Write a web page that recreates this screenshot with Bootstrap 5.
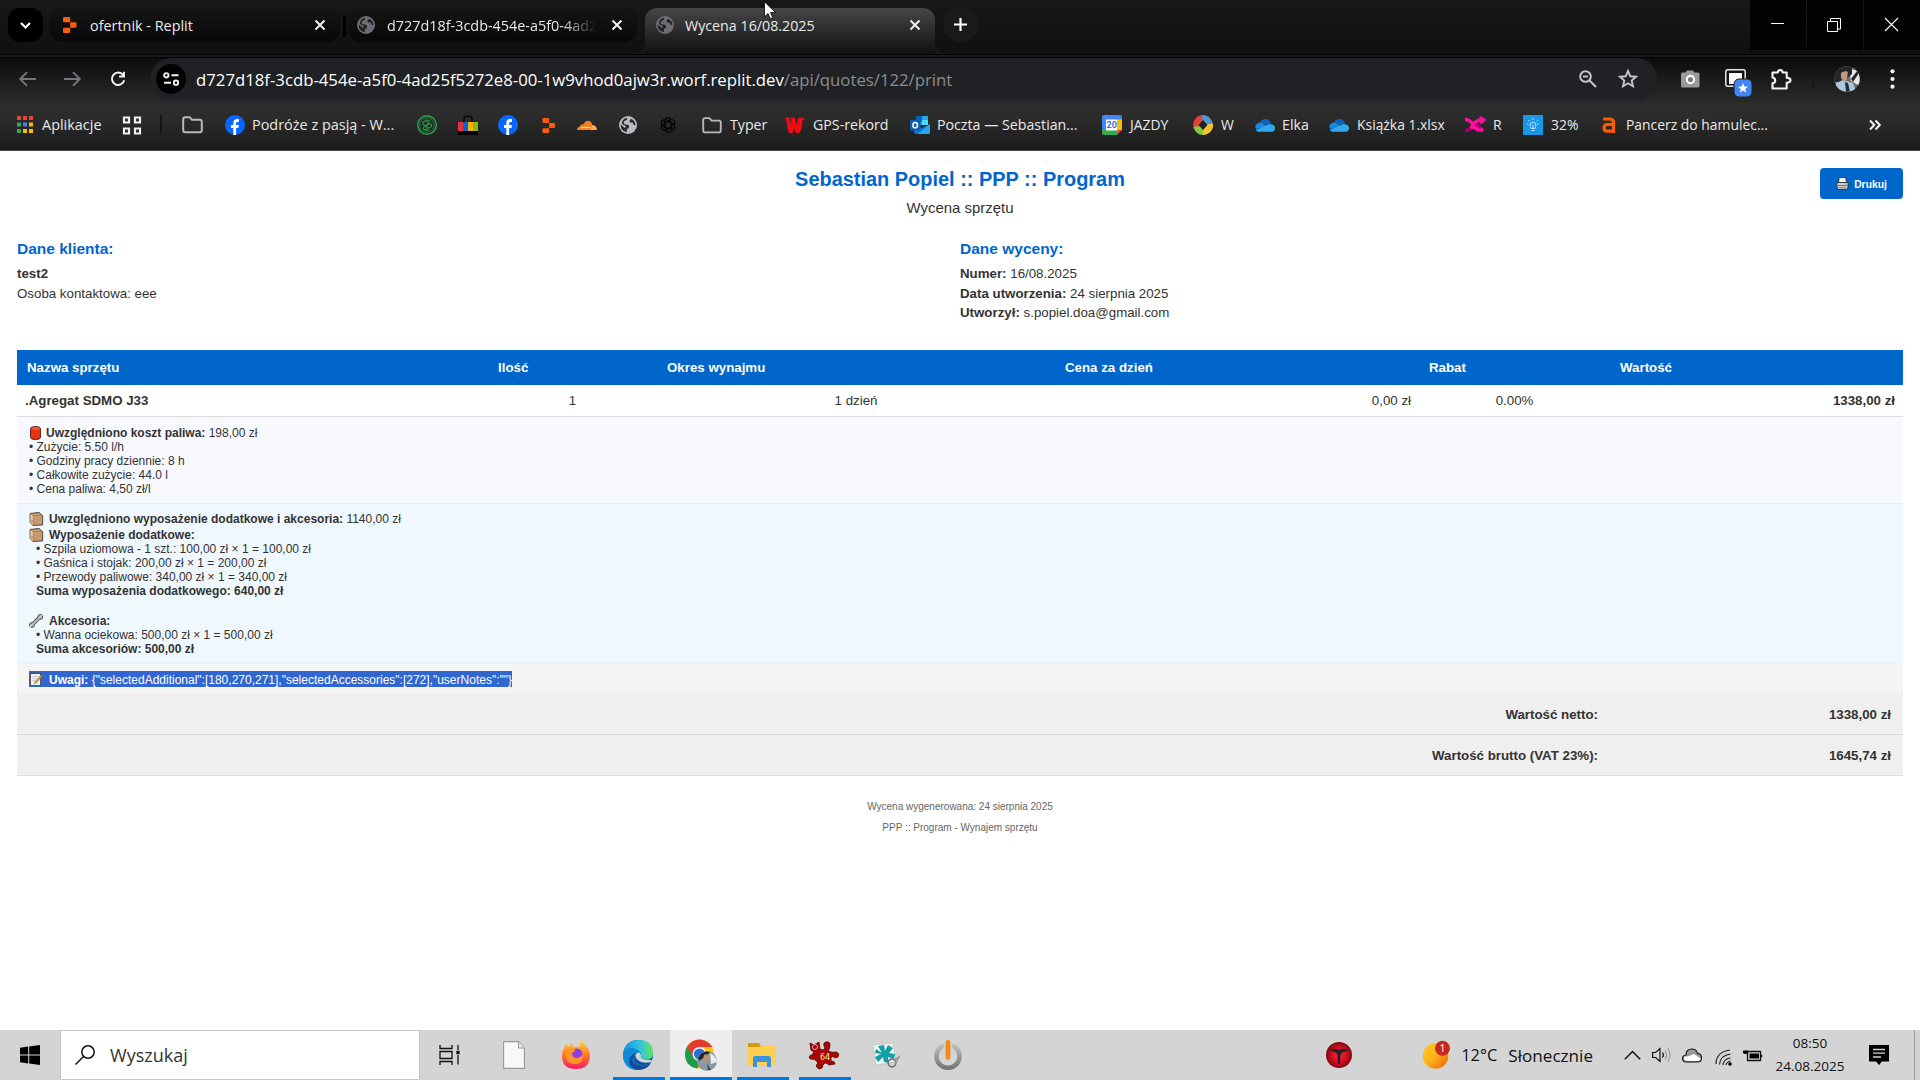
<!DOCTYPE html>
<html lang="pl">
<head>
<meta charset="utf-8">
<meta name="viewport" content="width=device-width, initial-scale=1">
<title>Wycena 16/08.2025</title>
<link href="https://cdn.jsdelivr.net/npm/bootstrap@5.3.0/dist/css/bootstrap.min.css" rel="stylesheet">
<style>
:root{--ui:"Open Sans","Noto Sans",sans-serif;--doc:"Liberation Sans",Arial,sans-serif;--blue:#0066cc}
body{width:1920px;height:1080px;overflow:hidden;background:#fff;color:#333;font-family:var(--doc)}
svg{display:block;flex:none;overflow:visible}
.browser-chrome{font-family:var(--ui);color:#e9e9e9;height:151px;border-bottom:1px solid #444}
/* tab strip */
.tab-strip{height:58px;background:linear-gradient(#181818,#101010 52px,#111 54px,#000 54px,#000 55px,#1c1c1c 55px,#1a1a1a 57px,#000 57px);padding-left:8px}
.tab-search{width:35px;height:34px;margin-top:8px;border-radius:12px;background:#000}
.tab-item{height:34px;margin-top:8px;border-radius:12px;background:linear-gradient(#151515,#080808);padding:0 6px 0 13px;font-size:14.4px;line-height:34px}
.tab-one{width:290px;margin-left:7px}
.tab-two{width:289px;margin-left:2px;padding-left:9px}
.tab-two .tab-label{margin-left:12px}
.tab-rule{width:3px;height:21px;margin:16px 0 0 3px;background:#000}
.tab-open{position:relative;width:290px;height:46px;margin:8px 0 0 8px;padding:0 10px 12px 11px;border-radius:12px 12px 0 0;background:linear-gradient(#464646,#101010);line-height:34px;font-size:14.25px}
.tab-open::before,.tab-open::after{content:"";position:absolute;bottom:0;width:12px;height:12px}
.tab-open::before{left:-12px;background:radial-gradient(circle at 0 0,transparent 11.5px,#181818 12px)}
.tab-open::after{right:-12px;background:radial-gradient(circle at 100% 0,transparent 11.5px,#181818 12px)}
.tab-label{overflow:hidden;white-space:nowrap;margin-left:13px;padding-top:1px}
.tab-open .tab-label{margin-left:11px}
.tab-fade{-webkit-mask-image:linear-gradient(90deg,#000 175px,transparent 209px);mask-image:linear-gradient(90deg,#000 175px,transparent 209px);width:209px}
.tab-plus{width:35px;height:35px;margin:7px 0 0 8px;border-radius:50%;background:#1a1a1a}
.win-btn{width:56px;height:50px;background:#020202;margin-left:1px;padding:0 2px 1px 0}
/* address row */
.address-row{height:45px;background:linear-gradient(#0c0c0c,#292929 43px)}
.bar-line{height:42px}
.nav-icons{width:150px;padding-left:18px;gap:24px}
.omnibox{width:1507px;height:42px;border-radius:21px;background:#202125;padding:0 19px 0 6px;font-size:16.74px;white-space:nowrap}
.star-icon{margin-left:21px}
.site-btn{width:30px;height:30px;border-radius:50%;background:#000;margin-right:10px}
.url-line{padding-top:1px}
.url-path{color:#8b8d91}
.ext-group{margin-left:23px}
.avatar{margin-left:20px}
.ext-wrap{width:21px;height:21px;position:relative;margin-left:25px}
.ext-star{position:absolute;left:8px;top:9px;width:20px;height:20px}
.ext-rule{width:2px;height:20px;background:#171717;margin-left:21px}
/* bookmarks */
.bookmark-row{height:47px;background:linear-gradient(#2d2d2d,#2b2b2b 16px,#1b1b1b);display:grid;align-items:start;padding-left:15px;font-size:14.2px;
 grid-template-columns:107px 38px 22px 43px 192px 41px 40px 40px 39px 42px 41px 42px 83px 125px 192px 91px 62px 74px 136px 58px 76px 266px 40px}
.bookmark-row>a{display:flex;align-items:center;gap:8px;color:#e9e9e9;text-decoration:none;white-space:nowrap;height:44px}
.bm-wide{font-size:14.45px}.bm-slim{font-size:13.9px}
.bookmark-row>.bm-tight{gap:7px}
.bm-rule{width:2px;height:19px;background:#151515;margin-top:12px}
/* quote sheet */
.quote-sheet{height:879px;padding:14px 17px 0;position:relative;font-size:13.3px}
.quote-title{font-size:19.95px;line-height:28px;font-weight:700;color:var(--blue)}
.quote-sub{font-size:14.95px;line-height:20px;margin-top:5px}
.print-btn{position:absolute;right:17px;top:17px;width:83px;height:31px;border:0;border-radius:4px;background:var(--blue);color:#fff;font:700 10.3px/31px var(--doc);gap:5px}
.print-btn span{padding-top:1px}
.party-row{margin-top:20px;height:112px;line-height:19.6px}
.party-row h3{font:700 15.5px/22px var(--doc);color:var(--blue);margin:0 0 4.3px}
.quote-table{table-layout:fixed;width:1886px;margin:0;border-collapse:separate;border-spacing:0;color:#333;font-size:13.3px;line-height:16px}
.quote-table>:not(caption)>*>*{background:transparent;color:inherit;box-shadow:none;border-bottom:1px solid #ddd;padding:0 8px;vertical-align:middle}
.quote-table>thead>tr>th{background:var(--blue);color:#fff;border:0;height:35px;padding:0 10px}
.quote-table>tbody>.line-item>td{height:32px}
.quote-table>tbody>.detail>td{font-size:12px;line-height:14px;padding:0 12px;vertical-align:top;border-bottom-color:#eee}
.detail p{margin:0;height:14px;white-space:nowrap}
.detail .sub-line{padding-left:7px}
.detail .lead-line{display:flex;align-items:center;gap:5px}
.quote-table>tbody>.fuel>td{background:#f8f9ff;height:87px;padding-top:8px}
.fuel .lead-line{height:15px}
.quote-table>tbody>.equipment>td{background:#f0f8ff;height:160px;padding-top:7px}
.equipment .lead-line{height:15.5px}
.equipment .sub-head{padding-top:1px}
.equipment .tool-head{padding-top:2px}
.quote-table>tbody>.remarks>td{background:#f5f5f5;height:30px;padding-top:7px}
.remarks .lead-line{display:inline-flex;height:16px;background:#3166d0;color:#fff}
.remarks .lead-line span{padding-top:2px}
.quote-table>tfoot>tr>td{background:#efefef;height:41px;font-weight:700;text-align:right;padding:1px 12px 0}
.quote-table>tfoot>tr:first-child>td{border-bottom-color:#d9dadb}
.quote-foot{margin-top:20px;font-size:10px;line-height:21px;color:#666}
/* task bar */
.task-bar{height:50px;background:#d4d4d4;font-family:var(--ui);color:#111}
.start-btn{width:60px;height:50px}
.search-box{width:360px;height:50px;border:1px solid #c8c8c8;background:#fff;padding-left:14px;gap:15px;font-size:18.05px;color:#333}
.search-box span{padding-top:2px}
.task-app{width:62px;height:50px;display:flex;align-items:center;justify-content:center;position:relative;padding:0 2px 1px 0}
.task-run::after{content:"";position:absolute;left:5px;right:5px;bottom:0;height:3px;background:#0078d7}
.task-live{background:#ededed;padding:0}
.task-live::after{left:0;right:0}
.task-view{width:60px}
.file-app{margin-left:4px;padding-right:3px}
.sun-wrap{position:relative;margin:0 12px 0 71px}
.temp-text{font-size:16.4px;padding-top:1px}
.sky-text{font-size:17.1px;margin:0 31px 0 11px;padding-top:1px}
.tray-icons{gap:10px}
.clock{width:80px;font-size:13.5px;line-height:23px;text-align:center;margin-left:7px}
.note-icon{margin-left:19px}
.desk-edge{width:1px;height:50px;background:#9c9c9c;margin:0 5px 0 25px}
.mouse-pointer{position:absolute;left:764px;top:1px;z-index:9}
</style>
<script src="https://cdn.jsdelivr.net/npm/bootstrap@5.3.0/dist/js/bootstrap.bundle.min.js"></script>
</head>
<body>
<svg width="0" height="0" class="position-absolute" aria-hidden="true">
<defs>
<symbol id="close" viewBox="0 0 12 12"><path d="M1.500 1.500l9 9M10.500 1.500l-9 9" stroke="#f0f0f0" stroke-width="2" fill="none"/></symbol>
<symbol id="replit" viewBox="0 0 14 16"><path fill="#fa5b0f" d="M0 1.200Q0 0 1.200 0H6q1.200 0 1.200 1.200v4H1.200Q0 5.200 0 4zM7.200 5.300h5q1.300 0 1.300 1.200v3q0 1.200-1.300 1.200h-5zM0 12Q0 10.800 1.200 10.800h6v4Q7.200 16 6 16H1.200Q0 16 0 14.800z"/></symbol>
<symbol id="globe" viewBox="0 0 18 18"><circle cx="9" cy="9" r="9" fill="currentColor"/><path d="M8 1.800q.6 2.400-1.500 2.700T4.700 7q.3 1.500 2.300 1.500 3 0 3 2.200T8.300 12.500q-.8 1-.5 3.700-3.300-.5-5-3-1.300-2-1.100-4.700l3.500 3q1.500.8 1.500-.8Q6.500 9.300 4.600 9 2.500 8.300 3 5.700 4.500 2.500 8 1.800zM12.500 3q-2 .5-2 2.200 0 1.500 2 1.300 1.700-.3 1.700 1.200 0 1.700 2.300 1.300Q16.300 5 12.500 3z" fill="#17181a" fill-opacity=".9"/></symbol>
<symbol id="folder" viewBox="0 0 21 18"><path d="M1.200 3.200q0-2 2-2h4.500l2.300 2.600h7.800q2 0 2 2v8.500q0 2-2 2H3.200q-2 0-2-2z" fill="none" stroke="#b9b9b9" stroke-width="2"/></symbol>
<symbol id="facebook" viewBox="0 0 20 20"><circle cx="10" cy="10" r="10" fill="#0866ff"/><path d="M8.300 20v-7H6v-3h2.300V8.300c0-3 1.400-4.300 4-4.300.8 0 1.400.1 1.700.2V7h-1.200c-1.300 0-1.700.6-1.700 1.500V10h2.800l-.5 3h-2.300v7z" fill="#fff"/></symbol>
<symbol id="onedrive" viewBox="0 0 20 13"><path fill="#0f63b8" d="M5 4.500A5.500 5.500 0 0 1 15.500 3.500L17 7z"/><path fill="#1688dd" d="M1 10A4.300 4.300 0 0 1 6 3.800L14 8z"/><path fill="#32a9ee" d="M3.500 12.700Q1.500 12.500.7 11L14 5.300q6-.3 6 4 0 3.400-3.500 3.400z"/></symbol>
<symbol id="box" viewBox="0 0 14 14"><path d="M.6 1.400L9.600.5l3.600 3.200v9.200l-9.700.5L.6 10.500z" fill="#c79a72" stroke="#4a3728" stroke-width=".9"/><path d="M3.600 3.800l9-.4M3.600 3.800v9.400M.8 1.500l2.800 2.300" stroke="#a67c58" fill="none" stroke-width=".7"/><path d="M.9 2l2.500 2v8.700L1 10.200z" fill="#e8c7a4"/><path d="M1.800 9h1.500" stroke="#b13d2c"/></symbol>
<linearGradient id="gSun" x2="1" y2="1"><stop stop-color="#ffce21"/><stop offset=".5" stop-color="#ffb01a"/><stop offset="1" stop-color="#e85d04"/></linearGradient>
<linearGradient id="gFox" x2="0" y2="1"><stop stop-color="#ffd93a"/><stop offset=".5" stop-color="#ff7a2a"/><stop offset="1" stop-color="#f01b6a"/></linearGradient>
<linearGradient id="gEdge" x2="1"><stop stop-color="#1593dd"/><stop offset=".6" stop-color="#2fc7dc"/><stop offset="1" stop-color="#66e35b"/></linearGradient>
<linearGradient id="gPow" x2="0" y2="1"><stop stop-color="#bbb"/><stop offset="1" stop-color="#777"/></linearGradient>
<radialGradient id="gRed"><stop stop-color="#ff2638"/><stop offset=".6" stop-color="#d10e22"/><stop offset="1" stop-color="#7c0812"/></radialGradient>
</defs>
</svg>

<header class="browser-chrome">
  <div class="tab-strip d-flex align-items-start">
    <div class="tab-search d-flex align-items-center justify-content-center"><svg width="11" height="7" viewBox="0 0 11 7"><path d="M1 1l4.500 4.500L10 1" fill="none" stroke="#fff" stroke-width="2.200"/></svg></div>
    <div class="tab-item tab-one d-flex align-items-center"><svg width="14" height="16"><use href="#replit"/></svg><span class="tab-label flex-grow-1">ofertnik - Replit</span><svg class="me-2" width="12" height="12"><use href="#close"/></svg></div>
    <div class="tab-rule"></div>
    <div class="tab-item tab-two d-flex align-items-center"><svg width="18" height="18" color="#6a6e74"><use href="#globe"/></svg><span class="tab-label tab-fade">d727d18f-3cdb-454e-a5f0-4ad25f5272e8</span><svg class="ms-auto me-2" width="12" height="12"><use href="#close"/></svg></div>
    <div class="tab-open d-flex align-items-center"><svg width="18" height="18" color="#6a6e74"><use href="#globe"/></svg><span class="tab-label flex-grow-1">Wycena 16/08.2025</span><svg class="me-1" width="12" height="12"><use href="#close"/></svg></div>
    <div class="tab-plus d-flex align-items-center justify-content-center"><svg width="13" height="13" viewBox="0 0 13 13"><path d="M6.500 0v13M0 6.500h13" stroke="#fff" stroke-width="2.200"/></svg></div>
    <div class="ms-auto d-flex">
      <div class="win-btn d-flex align-items-center justify-content-center"><svg width="13" height="13"><path d="M0 5.500h13" stroke="#fff"/></svg></div>
      <div class="win-btn d-flex align-items-center justify-content-center"><svg width="14" height="14"><path d="M.5 3.500h10v10H.5zM3.500 3V.5h10V11H11" fill="none" stroke="#fff"/></svg></div>
      <div class="win-btn d-flex align-items-center justify-content-center"><svg width="13" height="13"><path d="M0 0l13 13M13 0L0 13" stroke="#fff" stroke-width="1.100"/></svg></div>
    </div>
  </div>

  <div class="address-row d-flex align-items-start">
    <div class="nav-icons bar-line d-flex align-items-center">
      <svg width="20" height="16" viewBox="0 0 20 16" fill="none" stroke="#74767a" stroke-width="1.900"><path d="M18 8H2.500M9 1.200L2.200 8 9 14.800"/></svg>
      <svg width="20" height="16" viewBox="0 0 20 16" fill="none" stroke="#74767a" stroke-width="1.900"><path d="M2 8h15.500M11 1.200L17.800 8 11 14.800"/></svg>
      <svg class="ms-1" width="16" height="16" viewBox="0 0 18 18" fill="none" stroke="#f2f2f2" stroke-width="2.200"><path d="M14.800 4.500A7 7 0 1 0 16 10.500M15.700.8v5.400h-5.500"/></svg>
    </div>
    <div class="omnibox d-flex align-items-center">
      <div class="site-btn d-flex align-items-center justify-content-center"><svg width="17" height="14" viewBox="0 0 17 14" fill="none" stroke="#f2f2f2" stroke-width="1.900"><circle cx="3.300" cy="3.300" r="2.200"/><path d="M8.500 3.300H15.500M1 10.700h7"/><circle cx="13" cy="10.700" r="2.200"/></svg></div>
      <div class="url-line"><span class="text-white">d727d18f-3cdb-454e-a5f0-4ad25f5272e8-00-1w9vhod0ajw3r.worf.replit.dev</span><span class="url-path">/api/quotes/122/print</span></div>
      <svg class="ms-auto" width="18" height="18" viewBox="0 0 18 18" fill="none" stroke="#c4c5c7" stroke-width="2"><circle cx="6.500" cy="6.500" r="5.300"/><path d="M10.500 10.500l6.500 6.500M4 6.500h5"/></svg>
      <svg class="star-icon" width="20" height="20" viewBox="0 0 20 20" fill="none" stroke="#c4c5c7" stroke-width="1.900"><path d="M10 2l2.300 5.300 5.700.5-4.300 3.800 1.300 5.700-5-3-5 3 1.300-5.700L2 7.800l5.700-.5z"/></svg>
    </div>
    <div class="ext-group bar-line d-flex align-items-center">
      <svg width="20" height="18" viewBox="0 0 20 18"><path d="M1 4q0-1.500 1.500-1.500h3L7 .5h6l1.500 2h3.500q1.500 0 1.500 1.500v12q0 1.500-1.500 1.500H2.500Q1 17.500 1 16z" fill="#9a9a9a"/><circle cx="10.500" cy="9.500" r="3.600" fill="#777" stroke="#fff" stroke-width="2.100"/></svg>
      <div class="ext-wrap"><svg width="21" height="18" viewBox="0 0 21 18"><rect x=".8" y=".8" width="19.400" height="16.400" rx="2" fill="#111" stroke="#e8e8e8" stroke-width="1.500"/><path d="M4 4h13v8H11v3H4z" fill="#fff"/></svg><svg class="ext-star" viewBox="0 0 20 20"><rect x="1" y="1" width="18" height="18" rx="5" fill="#4285f4" stroke="#222"/><path d="M10 5l1.400 3.500 3.600.2-2.800 2.300 1 3.600L10 12.600l-3.200 2 1-3.600L5 8.700l3.600-.2z" fill="#fff"/></svg></div>
      <svg class="ms-4" width="21" height="21" viewBox="0 0 21 21"><path d="M2.500 3.500h5.200Q8 1 10.200 1t2.500 2.500h4v5.300Q20.500 9 20.500 11.300t-3.800 2.500v5.700H2.500v-5.200q2.700-.5 2.700-2.900T2.500 8.500z" fill="none" stroke="#f2f2f2" stroke-width="2.100" stroke-linejoin="round"/></svg>
      <div class="ext-rule"></div>
      <svg class="avatar" width="26" height="26" viewBox="0 0 26 26"><clipPath id="face"><circle cx="13" cy="13" r="12.700"/></clipPath><g clip-path="url(#face)"><path fill="#6e706c" d="M0 0h26v26H0z"/><path fill="#e5e9ea" d="M15 3l11 2v15l-9-5z"/><path fill="#26292b" d="M0 0h18v8L9 16H0zM17 13l6-8 2 2-6 9z"/><path fill="#aac7dc" d="M2 17l7-3 10 3 3 9H2z"/><path fill="#c49a82" d="M7 5q4-3 7 0l-1 8-3 3-3-4z"/><path fill="#1e2b42" d="M11 16l3 1 2 9h-4z"/><path fill="#2b2420" d="M6 7q0-5 5-5t4 5l-3-2z"/></g></svg>
      <svg class="ms-4 ps-1" width="9" height="20" viewBox="0 0 5 20" fill="#f2f2f2"><circle cx="4.500" cy="2.300" r="2.100"/><circle cx="4.500" cy="10" r="2.100"/><circle cx="4.500" cy="17.700" r="2.100"/></svg>
    </div>
  </div>

  <nav class="bookmark-row">
    <a class="bm-wide bm-tight"><svg width="20" height="18" viewBox="0 0 20 18"><path fill="#ea4335" d="M2 0h4v4H2zM8 0h4v4H8zM14 0h4v4h-4z"/><path fill="#34a853" d="M2 6.500h4v4H2zM2 13h4v4H2z"/><path fill="#4285f4" d="M8 6.500h4v4H8z"/><path fill="#fbbc04" d="M14 6.500h4v4h-4zM8 13h4v4H8zM14 13h4v4h-4z"/></svg>Aplikacje</a>
    <a><svg width="19" height="19" viewBox="0 0 19 19" fill="none" stroke="#f0f0f0" stroke-width="2.200"><path d="M2 1.500h5v5H2zM13 1.500h5v5h-5zM2 12.500h5v5H2zM13 12.500h5v5h-5z"/></svg></a>
    <div class="bm-rule"></div>
    <a><svg width="21" height="18"><use href="#folder"/></svg></a>
    <a class="bm-wide bm-tight"><svg width="20" height="20"><use href="#facebook"/></svg>Podróże z pasją - W...</a>
    <a><svg width="20" height="20" viewBox="0 0 20 20" fill="none" stroke="#22a24a"><circle cx="10" cy="10" r="9.300" stroke-width="1.500"/><circle cx="10" cy="10" r="7.300" stroke-width=".6"/><path stroke-width="1.100" d="M10 10q-5 1-4-2t3-1.500q1-2.500 2.500-1t-1.500 4.500q4-2.500 4.500 0t-3 2.500q1 2.500-1 3T10 10zm0 0q-3 1-3.500 3t2 1.500M8 14.500v1.500"/></svg></a>
    <a><svg width="20" height="20" viewBox="0 0 20 20"><path d="M6 7V4q0-3 4-3t4 3v3" stroke="#080808" stroke-width="1.500" fill="none"/><path fill="#e53238" d="M0 7h5v9H0z"/><path fill="#0064d2" d="M5 7h5v9H5z"/><path fill="#f5af02" d="M10 7h5v9h-5z"/><path fill="#86b817" d="M15 7h5v9h-5z"/><path d="M0 16h20v4H0z"/></svg></a>
    <a><svg width="20" height="20"><use href="#facebook"/></svg></a>
    <a class="ps-1"><svg width="14" height="15"><use href="#replit"/></svg></a>
    <a><svg width="20" height="20" viewBox="0 0 20 20"><path fill="#f38020" d="M0 15q0-3 3-3.500Q4 8.500 6.500 9.500 8.500 5 12 6q3 .8 3.300 4L14 15z"/><path fill="#faae40" d="M15 10q4.500 0 5 5h-6.500z"/><path d="M4 12.600h9.500" stroke="#fff" stroke-width=".8"/></svg></a>
    <a><svg width="18" height="18" color="#b8babd"><use href="#globe"/></svg></a>
    <a><svg width="16" height="18" viewBox="-9 -9 18 18" fill="none" stroke="#050505" stroke-width="1.300"><g id="petal"><path d="M-3.500-2.200V-5.500Q-3-8.300 0-8.300 2-8.300 3.200-6.600M-3.500 2V-3L2-6"/></g><use href="#petal" transform="rotate(60)"/><use href="#petal" transform="rotate(120)"/><use href="#petal" transform="rotate(180)"/><use href="#petal" transform="rotate(240)"/><use href="#petal" transform="rotate(300)"/></svg></a>
    <a><svg width="20" height="17"><use href="#folder"/></svg>Typer</a>
    <a><svg width="20" height="17" viewBox="0 0 20 17"><path fill="#f30b12" d="M0 1q2.500-1.500 4.500 0L6 7.500q1-4-.3-6.500 2.500-1 4 0l1.800 6.500q2-3 1-5.500 1-2 3-1.500L18 1q2 1 2 3-2-1.500-3-.5 1 3-.5 6.500Q15.500 16.500 12.500 16.500 10 16 9 11q-.5 5.500-3 5.500T2.700 12L1.500 5Q1.300 2 0 1z"/></svg>GPS-rekord</a>
    <a class="bm-tight"><svg width="20" height="18" viewBox="0 0 20 18"><path fill="#28a8ea" d="M6 0h12v9H6z"/><path fill="#0364b8" d="M6 0h6v6H6z"/><path fill="#50d9ff" d="M12 4h6v5h-6z"/><path fill="#0f78d4" d="M4 9l8 3 8-4v8q0 2-2 2H6q-2 0-2-2z"/><path fill="#28a8ea" d="M8 18L20 8v8q0 2-2 2z"/><rect y="4" width="10.500" height="10.500" rx="1" fill="#0a5fb4"/><ellipse cx="5.200" cy="9.200" rx="2.300" ry="2.600" fill="none" stroke="#fff" stroke-width="1.500"/></svg>Poczta — Sebastian...</a>
    <a class="bm-slim"><svg width="20" height="20" viewBox="0 0 20 20"><path fill="#4285f4" d="M0 2q0-2 2-2h16q2 0 2 2v3H0z"/><path fill="#4285f4" d="M0 4h4.500v11H0z"/><path fill="#34a853" d="M0 15h15v5H2q-2 0-2-2z"/><path fill="#fbbc04" d="M15.500 4.500H20V15h-4.500z"/><path fill="#ea4335" d="M15 15h5l-5 5z"/><path fill="#fff" d="M4 4.500h11.500V15.500H4z"/><text x="9.700" y="13.400" text-anchor="middle" font-family="Roboto" font-weight="700" font-size="9" fill="#3570df">20</text></svg>JAZDY</a>
    <a class="bm-slim"><svg width="20" height="20" viewBox="0 0 20 20"><path fill="#e4413b" d="M10 10L1 14A10 10 0 0 1 10 0z"/><path fill="#4b9ad4" d="M10 10L9 0A10 10 0 0 1 19.500 12z"/><path fill="#f6c429" d="M10 10L20 8.500A10 10 0 0 1 10 20z"/><path fill="#8bc63f" d="M10 10v10A10 10 0 0 1 .5 12z"/><path fill="#222" d="M10 5l4.500 5-4.500 5-4.500-5z"/></svg>W</a>
    <a class="bm-tight"><svg width="20" height="13"><use href="#onedrive"/></svg>Elka</a>
    <a class="bm-slim"><svg width="20" height="13"><use href="#onedrive"/></svg>Książka 1.xlsx</a>
    <a class="bm-slim"><svg width="20" height="16" viewBox="0 0 20 16" fill="none" stroke-width="3.600"><path stroke="#a8006b" d="M0 13.500q5 0 7-4M11.500 7l7 7"/><path stroke="#ff0f9b" d="M0 2.500q5 0 8 5t6 5.500h4M6 11.500Q10 3 15.500 3H18M14.500.5L18.500 3 15 6"/></svg>R</a>
    <a class="bm-slim"><svg width="20" height="20" viewBox="0 0 20 20"><rect width="20" height="20" rx="1" fill="#1899e8"/><path d="M8 13.500q0-2-1-3Q7 7 10 7t3 3.500q-1 1-1 3zM8.500 15.500h3M10 9.500v4M10 3v2M5 5l1.300 1.300M15 5l-1.300 1.300M4 9h1.500M16 9h-1.500" fill="none" stroke="#c6e8ff" stroke-width=".9"/></svg>32%</a>
    <a class="bm-slim bm-tight"><svg width="20" height="16" viewBox="0 0 20 16" fill="none" stroke="#ff5a00" stroke-width="3.200"><path d="M4 2h6.500q4 0 4 3.500v10.500M14 7.500H8.500q-3.500 0-3.500 3.200 0 3.500 3.500 3.500H14"/></svg>Pancerz do hamulec...</a>
    <a class="ps-1"><svg width="12" height="10" viewBox="0 0 12 10" fill="none" stroke="#f2f2f2" stroke-width="2"><path d="M1 .5L5.300 5 1 9.500M6.500.5L10.800 5 6.500 9.500"/></svg></a>
  </nav>
</header>

<main class="quote-sheet">
  <button class="print-btn btn p-0 d-flex align-items-center justify-content-center"><svg width="13" height="13" viewBox="0 0 13 13"><path fill="#f3f3ee" stroke="#292929" stroke-width=".8" d="M3.200.5h6.500l.8 5H2.500z"/><path fill="#cfcfcb" stroke="#292929" stroke-width=".8" d="M1 5.500h11v4.500l-1.200 2.500H2.200L1 10z"/><path stroke="#777" d="M2 8.500h9M3 10.800h7"/><path stroke="#a0c71b" d="M8.500 7h2"/></svg><span>Drukuj</span></button>
  <div class="text-center">
    <div class="quote-title">Sebastian Popiel :: PPP :: Program</div>
    <div class="quote-sub">Wycena sprzętu</div>
  </div>
  <div class="party-row row g-0">
    <section class="col-6"><h3>Dane klienta:</h3><strong>test2</strong><br>Osoba kontaktowa: eee</section>
    <section class="col-6"><h3>Dane wyceny:</h3><strong>Numer:</strong> 16/08.2025<br><strong>Data utworzenia:</strong> 24 sierpnia 2025<br><strong>Utworzył:</strong> s.popiel.doa@gmail.com</section>
  </div>
  <table class="table quote-table">
    <colgroup><col width="471"><col width="169"><col width="398"><col width="364"><col width="191"><col width="293"></colgroup>
    <thead><tr><th>Nazwa sprzętu</th><th>Ilość</th><th>Okres wynajmu</th><th>Cena za dzień</th><th>Rabat</th><th>Wartość</th></tr></thead>
    <tbody>
      <tr class="line-item"><td class="fw-bold">.Agregat SDMO J33</td><td class="text-center">1</td><td class="text-center">1 dzień</td><td class="text-end">0,00 zł</td><td class="text-center">0.00%</td><td class="text-end fw-bold">1338,00 zł</td></tr>
      <tr class="detail fuel"><td colspan="6">
        <p class="lead-line"><svg width="12" height="14" viewBox="0 0 12 14"><path fill="#e8330d" stroke="#3e0c06" stroke-width=".8" d="M1.500 2.500Q1.500.5 6.500.5t5 2v9q0 2-5 2t-5-2z"/><ellipse cx="6.500" cy="2.500" rx="4" ry="1.300" fill="#f75a30"/></svg><span><strong>Uwzględniono koszt paliwa:</strong> 198,00 zł</span></p>
        <p>• Zużycie: 5.50 l/h</p><p>• Godziny pracy dziennie: 8 h</p><p>• Całkowite zużycie: 44.0 l</p><p>• Cena paliwa: 4,50 zł/l</p>
      </td></tr>
      <tr class="detail equipment"><td colspan="6">
        <p class="lead-line"><svg width="15" height="14"><use href="#box"/></svg><span><strong>Uwzględniono wyposażenie dodatkowe i akcesoria:</strong> 1140,00 zł</span></p>
        <p class="lead-line sub-head"><svg width="15" height="14"><use href="#box"/></svg><strong>Wyposażenie dodatkowe:</strong></p>
        <p class="sub-line">• Szpila uziomowa - 1 szt.: 100,00 zł × 1 = 100,00 zł</p>
        <p class="sub-line">• Gaśnica i stojak: 200,00 zł × 1 = 200,00 zł</p>
        <p class="sub-line">• Przewody paliwowe: 340,00 zł × 1 = 340,00 zł</p>
        <p class="sub-line"><strong>Suma wyposażenia dodatkowego: 640,00 zł</strong></p>
        <p>&nbsp;</p>
        <p class="lead-line tool-head"><svg width="15" height="14" viewBox="0 0 15 14"><path d="M3.500 10.500L10.500 3.500" stroke="#333" stroke-width="3.600"/><circle cx="3" cy="11" r="2.400" fill="#bbb" stroke="#333" stroke-width=".9"/><circle cx="11.300" cy="2.900" r="2.400" fill="#bbb" stroke="#333" stroke-width=".9"/><path d="M3.300 10.700L11 3.200" stroke="#c4c4c4" stroke-width="1.900"/><path d="M2.700 11.300L.6 13.400M11.600 2.600L13.700.5" stroke="#f0f8ff" stroke-width="1"/></svg><strong>Akcesoria:</strong></p>
        <p class="sub-line">• Wanna ociekowa: 500,00 zł × 1 = 500,00 zł</p>
        <p class="sub-line"><strong>Suma akcesoriów: 500,00 zł</strong></p>
      </td></tr>
      <tr class="detail remarks"><td colspan="6">
        <p class="lead-line"><svg width="15" height="14" viewBox="0 0 15 14"><path d="M1.500 1.500h10v12h-10z" fill="#eef0ee" stroke="#444" stroke-width=".8"/><path d="M1.500 1.200h10" stroke="#555" stroke-width="1.500"/><path d="M3.500 4.500h5M3.500 6.500h4M3.500 8.500h3" stroke="#b4bcc4" stroke-width=".7"/><path d="M5.500 11.500l.7-2 6-6.500 1.200 1L7.500 10.500z" fill="#f0a63a" stroke="#6d4b1b" stroke-width=".5"/></svg><span><strong>Uwagi:</strong> {"selectedAdditional":[180,270,271],"selectedAccessories":[272],"userNotes":""}</span></p>
      </td></tr>
    </tbody>
    <tfoot>
      <tr><td colspan="5">Wartość netto:</td><td>1338,00 zł</td></tr>
      <tr><td colspan="5">Wartość brutto (VAT 23%):</td><td>1645,74 zł</td></tr>
    </tfoot>
  </table>
  <footer class="quote-foot text-center">Wycena wygenerowana: 24 sierpnia 2025<br>PPP :: Program - Wynajem sprzętu</footer>
</main>

<footer class="task-bar d-flex align-items-center">
  <div class="start-btn d-flex align-items-center justify-content-center"><svg width="20" height="20" viewBox="0 0 20 20"><path d="M0 2.800L8.200 1.600v7.900H0zM9.200 1.500L20 0v9.500H9.200zM0 10.500h8.200v7.900L0 17.200zM9.200 10.500H20V20L9.200 18.500z"/></svg></div>
  <div class="search-box d-flex align-items-center"><svg width="20" height="20" viewBox="0 0 20 20" fill="none" stroke="#111" stroke-width="1.500"><circle cx="13" cy="7" r="6.200"/><path d="M8.500 11.500L.5 19.500"/></svg><span>Wyszukaj</span></div>
  <div class="task-app task-view"><svg width="20" height="20" viewBox="0 0 20 20" fill="none" stroke="#111" stroke-width="1.300"><path d="M1 0v3.500h12V0M1 6.500h12v7H1zM1 20v-3.500h12V20M19 0v5M19 10v9.500"/><path fill="#111" d="M18 6.500h2v2h-2z"/></svg></div>
  <div class="task-app file-app"><svg width="22" height="28" viewBox="0 0 22 28"><path d="M.6.600h15L21.400 7v20.400H.6z" fill="#f7f8f8" stroke="#999" stroke-width="1.100"/><path d="M15.500.600V7h6" fill="#e4e5e5" stroke="#999"/></svg></div>
  <div class="task-app"><svg width="28" height="29" viewBox="0 0 28 29"><path fill="url(#gFox)" d="M2 8L4 4l3 3 2-4 3 4q3-1 6 0-1-4 2-7 1 4 4 6t4 9q0 14-14 14T0 16q0-5 2-8z"/><circle cx="14.500" cy="14.500" r="6" fill="#8a3ee8"/><path fill="#ff9228" d="M4 10q4-3 10 0l-4 3q0 5 5 5 4-.5 6-4 1 10-8 10T4 15z"/></svg></div>
  <div class="task-app task-run"><svg width="30" height="30" viewBox="0 0 30 30"><circle cx="15" cy="15" r="15" fill="#0d6cc4"/><path fill="url(#gEdge)" d="M0 14Q2 0 15 0q15 0 15 13 0 7-8 7-6 0-4-3 1-6-6-8Q5 7 0 14z"/><path fill="#1188d8" d="M0 15q2-7 8-7 6 0 8 4-6 0-7 6 0 8 6 12Q2 30 0 17z"/><path fill="#124c94" d="M9 18q0 8 10 8 6 0 9-3-4 7-13 7-9-2-9-8 0-6 7-10-5 4 0 10 5 5 14 1"/><path fill="#d4d4d4" d="M12.500 16q0-4 4-3.500 2 2 1.300 5 2 3 7.700 2.500H29l-1 2q-8 2-12-1-3-2-3.500-5z"/></svg></div>
  <div class="task-app task-run task-live"><svg width="32" height="32" viewBox="0 0 32 32"><circle cx="14.500" cy="15" r="14.500" fill="#fbc116"/><path fill="#e33b2e" d="M2 7.500Q7 .5 14.500.5T27.500 8H14.500L8 18z"/><path fill="#219b49" d="M2 7.500l7 11q3 4 8 3l-5 8Q0 27 0 15q0-4 2-7.500z"/><circle cx="14.500" cy="15" r="7" fill="#fff"/><circle cx="14.500" cy="15" r="5.600" fill="#2a70df"/><circle cx="22" cy="22" r="10" fill="#8a9aa5"/><path fill="#262626" d="M13 19q4-8 12-6l-4 4-7 5z"/><path fill="#e7ebed" d="M25 14q7 4 7 9l-6 2z"/><path fill="#bd8f75" d="M19 16q4-2 5 2l-2 6-4-3z"/><path fill="#33475c" d="M22 24l4 7h-3z"/></svg></div>
  <div class="task-app task-run"><svg width="28" height="24" viewBox="0 0 28 24"><path fill="#d79b05" d="M0 1q0-1 1-1h10l2 3-2 2H0z"/><path fill="#ffcf52" d="M0 4h12l2-2h13q1 0 1 1v20H0z"/><path fill="#3c93dc" d="M5 24V15q0-2 2-2h14q2 0 2 2v9h-4v-5H9v5z"/></svg></div>
  <div class="task-app task-run"><svg width="30" height="28" viewBox="0 0 30 28"><path fill="#a80505" stroke="#550000" stroke-width=".8" d="M1 2l4 2 5-3 1 7q4 2 5-1-3-5 1-6t4 3-2 6q4 2 8 1 4 1 2 5-4 2-5-1-3 2-2 5 4 0 4 3l-6 1q-4-4-6 0 0 4-4 4-5-3-1-6-3-5-8-4-2-4 2-4l2-3-3-2z"/><circle cx="6" cy="6" r="2.500" fill="none" stroke="#eba0a0"/><text x="16" y="19" text-anchor="middle" font-family="DejaVu Sans" font-size="8" fill="#fff3a0">64</text></svg></div>
  <div class="task-app"><svg width="28" height="26" viewBox="0 0 28 26"><path fill="#f2f5f5" stroke="#bbb" stroke-width=".7" d="M1 3l20-2 3 19-20 3z"/><path fill="#10a0a5" d="M10 11L6 4l6-1 1 6 3-6 5 3-4 5 6 1-1 5-6-2 1 6-5-1-1-5-5 5-3-5 6-3-6-1 1-4z"/><circle cx="20" cy="21" r="3.800" fill="none" stroke="#6d7476" stroke-width="1.700"/><path d="M22 18l5-3-4 7" stroke="#92999b" fill="none" stroke-width="1.500"/></svg></div>
  <div class="task-app"><svg width="28" height="29" viewBox="0 0 28 29" fill="none" stroke-linecap="round"><path d="M8 6.500A11.500 11.500 0 1 0 20 6.500" stroke="url(#gPow)" stroke-width="4.600"/><path d="M14 2.500v15" stroke="#f08c17" stroke-width="4.800"/></svg></div>
  <div class="ms-auto d-flex align-items-center">
    <svg width="26" height="26" viewBox="0 0 26 26"><circle cx="13" cy="13" r="13" fill="url(#gRed)"/><path fill="#2a2023" d="M3 9q6-4 10-1 4-3 10 1-7 0-8.500 4l-.5 9h-2l-.5-9Q10 9 3 9z"/></svg>
    <div class="sun-wrap"><svg width="26" height="27" viewBox="0 0 26 27"><circle cx="12.500" cy="14" r="12.800" fill="url(#gSun)"/><circle cx="19.500" cy="6.200" r="7.500" fill="#c7281d"/><text x="19.500" y="10" text-anchor="middle" font-family="Open Sans" font-size="10.500" fill="#fff">1</text></svg></div>
    <span class="temp-text">12°C</span><span class="sky-text">Słonecznie</span>
    <div class="tray-icons d-flex align-items-center">
      <svg width="17" height="10" viewBox="0 0 17 10"><path d="M.8 9.200L8.500 1.500l7.700 7.700" fill="none" stroke="#111" stroke-width="1.500"/></svg>
      <svg width="21" height="16" viewBox="0 0 21 16" fill="none" stroke="#111" stroke-width="1.200"><path d="M1.600 5.500h3L9 1.500v13l-4.400-4h-3zM11.500 5.500q1.800 2.500 0 5"/><path d="M14 3.500q3 4.500 0 9M17 1.500q4 6.500 0 13" stroke="#999"/></svg>
      <svg width="20" height="15" viewBox="0 0 20 15"><path d="M4.500 14q-4 0-4-3.500 0-3 3.500-3.500 0-6 6-6 4.500 0 5.500 4.500 4 0 4 4.200 0 4.300-4 4.300z" fill="#999" stroke="#111" stroke-width="1.100"/><path d="M5 12.800q-3.500-.5-3-3 1-2 4-1.300l6-2.500 7 5-2 2z" fill="#fff"/></svg>
      <svg class="ms-1 mt-1" width="17" height="17" viewBox="0 0 17 17" fill="none" stroke="#222" stroke-width="1.200"><path d="M0 15Q0 3 14 1M3.500 15.500Q4 6.500 14.500 5M7 16q.5-6 7.500-7M10 16q.5-3 4.500-4"/><circle cx="14" cy="15" r="1.800" fill="#000" stroke="none"/></svg>
      <svg width="20" height="14" viewBox="0 0 20 14"><path d="M4.500 3.500h13v9h-13zM18.500 6.500v3" fill="none" stroke="#111" stroke-width="1.300"/><path d="M6.500 5.500h9.500v5H6.500zM0 2.500h5V5Q2.500 7 0 5zM1 0v3M4 0v3"/></svg>
    </div>
    <div class="clock">08:50<br>24.08.2025</div>
    <svg class="note-icon" width="20" height="20" viewBox="0 0 20 20"><path d="M0 0h20v16.500h-7L10 20l-3-3.500H0z"/><path d="M4 4.500h12M4 8.200h12M4 12h8" stroke="#d4d4d4" stroke-width="1.300"/></svg>
    <div class="desk-edge"></div>
  </div>
</footer>
<svg class="mouse-pointer" width="13" height="18" viewBox="0 0 13 18"><path d="M.5.800v15l3.500-3.300 2.300 5.200 2.500-1-2.300-5.200h5z" fill="#fff" stroke="#000" stroke-width=".8"/></svg>
</body>
</html>
